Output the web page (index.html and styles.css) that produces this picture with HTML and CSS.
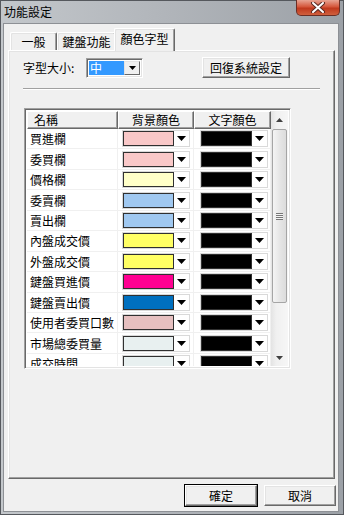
FILE: index.html
```html
<!DOCTYPE html>
<html lang="zh-Hant">
<head>
    <meta charset="UTF-8">
    <title>功能設定</title>
    <link rel="stylesheet" href="styles.css">
</head>
<body>
    <div class="window">
        <div class="titlebar">
            <span class="title">功能設定</span>
            <span class="close">
                <svg width="16" height="11" viewBox="0 0 16 11">
                    <path d="M3 1 L13 10 M13 1 L3 10" stroke="#5a2a22" stroke-width="4" stroke-linecap="round"/>
                    <path d="M3 1 L13 10 M13 1 L3 10" stroke="#fff" stroke-width="2" stroke-linecap="round"/>
                </svg>
            </span>
        </div>
        <div class="client">
            <div class="tabs">
                <div class="tab tab-general">一般</div>
                <div class="tab tab-keys">鍵盤功能</div>
                <div class="tab active">顏色字型</div>
            </div>
            <div class="panel">
                <div class="font-row">
                    <label class="font-label">字型大小:</label>
                    <div class="combo">
                        <span class="combo-value">中</span>
                        <span class="combo-btn"><svg width="7" height="4" viewBox="0 0 7 4"><polygon points="0,0 7,0 3.5,4" fill="#000"/></svg></span>
                    </div>
                    <button class="btn reset-btn">回復系統設定</button>
                </div>
                <div class="sep"></div>
                <div class="list">
                    <div class="list-body">
                        <div class="list-head">
                            <div class="col col-name">名稱</div>
                            <div class="col col-bg">背景顏色</div>
                            <div class="col col-fg">文字顏色</div>
                        </div>
                        <div id="rows"></div>
                    </div>
                    <div class="scrollbar">
                        <div class="sb-btn"><svg width="7" height="4" viewBox="0 0 7 4"><polygon points="3.5,0 7,4 0,4" fill="#404040"/></svg></div>
                        <div class="sb-track">
                            <div class="sb-thumb"><span class="grip"></span></div>
                        </div>
                        <div class="sb-btn"><svg width="7" height="4" viewBox="0 0 7 4"><polygon points="0,0 7,0 3.5,4" fill="#404040"/></svg></div>
                    </div>
                </div>
            </div>
            <div class="actions">
                <button class="btn default-btn">確定</button>
                <button class="btn">取消</button>
            </div>
        </div>
    </div>
    <script>
        const items = [
            ['買進欄', '#f9c8c8'],
            ['委買欄', '#f9c8c8'],
            ['價格欄', '#ffffc8'],
            ['委賣欄', '#a0c8f0'],
            ['賣出欄', '#a0c8f0'],
            ['內盤成交價', '#ffff64'],
            ['外盤成交價', '#ffff64'],
            ['鍵盤買進價', '#ff0092'],
            ['鍵盤賣出價', '#0070c0'],
            ['使用者委買口數', '#e6c0c0'],
            ['市場總委買量', '#e8f0f0'],
            ['成交時間', '#e8f0f0']
        ];
        const arrow = '<span class="arr"><svg width="9" height="5" viewBox="0 0 9 5"><polygon points="0,0 9,0 4.5,5" fill="#000"/></svg></span>';
        const rows = document.getElementById('rows');
        items.forEach(([name, bg]) => {
            const row = document.createElement('div');
            row.className = 'row';
            row.innerHTML =
                '<div class="col col-name">' + name + '</div>' +
                '<div class="col col-bg"><span class="pick"><span class="sw" style="background:' + bg + '"></span>' + arrow + '</span></div>' +
                '<div class="col col-fg"><span class="pick"><span class="sw" style="background:#000"></span>' + arrow + '</span></div>';
            rows.appendChild(row);
        });
    </script>
</body>
</html>
```

FILE: styles.css
```css
* {
    box-sizing: border-box;
}
body {
    margin: 0;
    width: 344px;
    height: 515px;
    overflow: hidden;
    font-family: "Noto Sans CJK TC", "Liberation Sans", sans-serif;
    font-size: 12px;
    color: #000;
    background: #9da2a8;
}
.window {
    height: 515px;
    display: flex;
    flex-direction: column;
    border: 1px solid #55585d;
    background: linear-gradient(to right, #c3c7cb, #b2b6bb 45%, #9ca1a7);
}
.titlebar {
    height: 22px;
    display: flex;
    justify-content: space-between;
    align-items: flex-start;
    padding-left: 3px;
}
.title {
    margin-top: 4px;
    line-height: 14px;
}
.close {
    width: 44px;
    height: 16px;
    margin-top: -1px;
    margin-right: 3px;
    display: flex;
    align-items: center;
    justify-content: center;
    border: 1px solid #6b2e24;
    border-top: none;
    border-radius: 0 0 5px 5px;
    background: linear-gradient(#e8a493, #d5573b 45%, #c0391d 55%, #d0603e);
}
.client {
    flex: 1;
    margin: 0 4px 2px 2px;
    border: 1px solid #8d9095;
    background: #f0f0f0;
    display: flex;
    flex-direction: column;
}
.tabs {
    height: 26px;
    padding: 4px 0 0 6px;
    display: flex;
    align-items: flex-end;
}
.tab {
    height: 19px;
    margin-bottom: -1px;
    padding-top: 1px;
    text-align: center;
    line-height: 16px;
    white-space: nowrap;
    border: 1px solid #fff;
    border-right-color: #696969;
    border-bottom: none;
    border-radius: 2px 2px 0 0;
    box-shadow: inset -1px 0 #a0a0a0, inset 1px 1px #e3e3e3;
    background: #f0f0f0;
}
.tab-general {
    width: 47px;
}
.tab-keys {
    width: 59px;
}
.tab.active {
    width: 61px;
    height: 23px;
    margin-left: -2px;
    padding-top: 2px;
    position: relative;
    z-index: 1;
}
.panel {
    height: 429px;
    margin-left: 4px;
    width: 327px;
    border: 1px solid;
    border-color: #fff #696969 #696969 #fff;
    box-shadow: inset -1px -1px #a0a0a0, inset 1px 1px #e3e3e3;
    padding: 6px 0 0 13px;
}
.font-row {
    height: 21px;
    display: flex;
    align-items: center;
}
.font-label {
    width: 64px;
    padding-left: 1px;
}
.combo {
    width: 57px;
    height: 20px;
    display: flex;
    border: 1px solid;
    border-color: #a0a0a0 #fff #fff #a0a0a0;
    box-shadow: inset 1px 1px #696969, inset -1px -1px #e3e3e3;
    background: #fff;
    padding: 2px;
}
.combo-value {
    flex: 1;
    background: #3399ff;
    color: #fff;
    line-height: 14px;
    padding-left: 1px;
}
.combo-btn {
    width: 16px;
    display: flex;
    align-items: center;
    justify-content: center;
    border: 1px solid;
    border-color: #e3e3e3 #696969 #696969 #e3e3e3;
    background: #f0f0f0;
}
.btn {
    font-family: inherit;
    font-size: 12px;
    color: #000;
    background: #f0f0f0;
    border: 1px solid;
    border-color: #fff #696969 #696969 #fff;
    box-shadow: inset -1px -1px #a0a0a0, inset 1px 1px #e3e3e3;
    padding: 0;
}
.reset-btn {
    width: 88px;
    height: 21px;
    margin-left: 59px;
}
.sep {
    width: 297px;
    margin: 10px 0 0 1px;
    border-top: 1px solid #a0a0a0;
    border-bottom: 1px solid #fff;
}
.list {
    width: 267px;
    height: 261px;
    margin: 18px 0 0 2px;
    display: flex;
    border: 1px solid;
    border-color: #a0a0a0 #fff #fff #a0a0a0;
    box-shadow: inset 1px 1px #696969, inset -1px -1px #e3e3e3;
    padding: 2px;
    background: #fff;
}
.list-body {
    width: 246px;
    overflow: hidden;
}
.list-head {
    height: 18px;
    display: flex;
}
.list-head .col {
    height: 18px;
    text-align: center;
    line-height: 16px;
    background: #f0f0f0;
    border: 1px solid;
    border-color: #fff #696969 #696969 #fff;
    box-shadow: inset -1px -1px #a0a0a0;
}
.list-head .col-name {
    text-align: left;
    padding-left: 6px;
}
.col-name {
    width: 92px;
    white-space: nowrap;
}
.col-bg {
    width: 76px;
}
.col-fg {
    width: 78px;
}
.row {
    height: 20.45px;
    display: flex;
}
.row .col {
    border-right: 1px solid #f0f0f0;
    border-bottom: 1px solid #f0f0f0;
    display: flex;
    align-items: center;
}
.row .col-name {
    padding-left: 3px;
    overflow: hidden;
}
.row .col-bg {
    padding-left: 4px;
}
.row .col-fg {
    padding-left: 6px;
}
.pick {
    display: flex;
    align-items: center;
    height: 17px;
    border: 1px solid #d9d9d9;
}
.sw {
    width: 51px;
    height: 15px;
    border: 1px solid #303030;
}
.arr {
    width: 15px;
    height: 15px;
    display: flex;
    align-items: center;
    justify-content: center;
    background: #fff;
}
.scrollbar {
    width: 17px;
    display: flex;
    flex-direction: column;
    background: linear-gradient(to right, #e3e3e3, #f0f0f0 30%, #f6f6f6);
}
.sb-btn {
    height: 17px;
    display: flex;
    align-items: center;
    justify-content: center;
}
.sb-track {
    flex: 1;
    padding-top: 1px;
}
.sb-thumb {
    height: 174px;
    margin: 0 1px;
    border: 1px solid #a5a5a5;
    border-radius: 2px;
    background: linear-gradient(to right, #f4f4f4, #e6e6e6 50%, #dcdcdc);
    display: flex;
    align-items: center;
    justify-content: center;
}
.grip {
    width: 7px;
    height: 7px;
    background: repeating-linear-gradient(#777 0 1px, #f4f4f4 1px 2px);
}
.actions {
    display: flex;
    justify-content: flex-end;
    gap: 7px;
    padding: 6px 2px 0 0;
}
.actions .btn {
    width: 72px;
    height: 21px;
}
.default-btn {
    outline: 1px solid #000;
    outline-offset: 0;
}
```
